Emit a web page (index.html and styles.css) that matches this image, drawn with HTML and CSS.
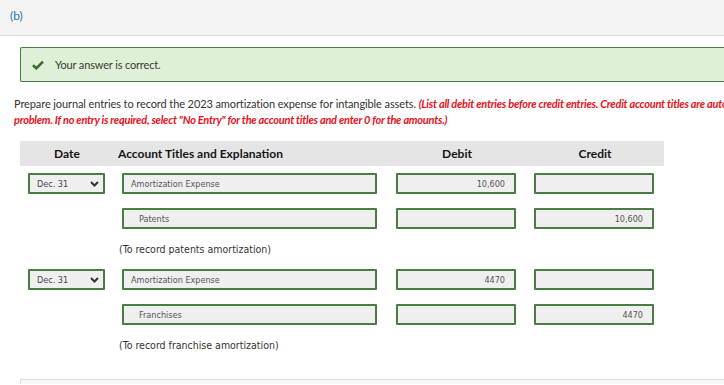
FILE: index.html
```html
<!DOCTYPE html>
<html>
<head>
<meta charset="utf-8">
<link rel="stylesheet" href="styles.css">
</head>
<body>
<div class="topbar"><span class="part">(b)</span></div>
<div class="content">
  <div class="notice">
    <svg class="check" width="12" height="10" viewBox="0 0 12 10"><path d="M1 5.2 L4.3 8.3 L11 1.6" fill="none" stroke="#3a6b2c" stroke-width="2.6"/></svg>
    <span class="notice-text">Your answer is correct.</span>
  </div>
  <div class="instr">
    <div class="line">Prepare journal entries to record the 2023 amortization expense for intangible assets. <em class="warn">(List all debit entries before credit entries. Credit account titles are automatically indented when amount is entered.</em></div>
    <div class="line"><em class="warn">problem. If no entry is required, select "No Entry" for the account titles and enter 0 for the amounts.)</em></div>
  </div>
  <div class="journal">
    <div class="jhead">
      <div class="h-date">Date</div>
      <div class="h-acct">Account Titles and Explanation</div>
      <div class="h-num">Debit</div>
      <div class="h-num">Credit</div>
    </div>
    <div class="jrow">
      <div class="cell"><div class="field sel"><span>Dec. 31</span><svg class="chev" width="9" height="6" viewBox="0 0 9 6"><path d="M1 1 L4.5 4.5 L8 1" fill="none" stroke="#333" stroke-width="2"/></svg></div></div>
      <div class="cell"><div class="field acct">Amortization Expense</div></div>
      <div class="cell"><div class="field num">10,600</div></div>
      <div class="cell"><div class="field num"></div></div>
    </div>
    <div class="jrow">
      <div class="cell"></div>
      <div class="cell"><div class="field acct indent">Patents</div></div>
      <div class="cell"><div class="field num"></div></div>
      <div class="cell"><div class="field num">10,600</div></div>
    </div>
    <div class="expl">(To record patents amortization)</div>
    <div class="jrow first">
      <div class="cell"><div class="field sel"><span>Dec. 31</span><svg class="chev" width="9" height="6" viewBox="0 0 9 6"><path d="M1 1 L4.5 4.5 L8 1" fill="none" stroke="#333" stroke-width="2"/></svg></div></div>
      <div class="cell"><div class="field acct">Amortization Expense</div></div>
      <div class="cell"><div class="field num">4470</div></div>
      <div class="cell"><div class="field num"></div></div>
    </div>
    <div class="jrow">
      <div class="cell"></div>
      <div class="cell"><div class="field acct indent">Franchises</div></div>
      <div class="cell"><div class="field num"></div></div>
      <div class="cell"><div class="field num">4470</div></div>
    </div>
    <div class="expl">(To record franchise amortization)</div>
  </div>
  <div class="nextbox"></div>
</div>
</body>
</html>
```
FILE: styles.css
```css
html, body {
  margin: 0;
  padding: 0;
  background: #fff;
  overflow: hidden;
  width: 724px;
  height: 385px;
}
body {
  font-family: Lato, "Liberation Sans", sans-serif;
  color: #333;
}
.topbar {
  height: 36px;
  background: #f4f4f4;
  border-bottom: 1px solid #dcdcdc;
  box-sizing: border-box;
  display: flex;
  align-items: center;
  padding-left: 10px;
}
.part {
  color: #2b74b4;
  font-size: 12px;
  padding-bottom: 5px;
}
.content {
  padding-left: 20px;
}
.notice {
  margin-top: 11px;
  width: 704px;
  height: 35px;
  box-sizing: border-box;
  background: #dff0d8;
  border: 1px solid #4b7f41;
  border-right: none;
  border-radius: 2px 0 0 2px;
  display: flex;
  align-items: center;
  padding-left: 11px;
}
.check {
  display: block;
}
.notice-text {
  margin-left: 11px;
  font-size: 11px;
  color: #3b3b2f;
  letter-spacing: -0.15px;
}
.instr {
  margin: 14px 0 0 -6px;
  font-size: 11px;
  line-height: 16px;
  width: 710px;
  overflow: hidden;
  letter-spacing: -0.1px;
}
.line {
  white-space: nowrap;
}
.warn {
  color: #e5121b;
  font-weight: bold;
  font-style: italic;
  letter-spacing: -0.25px;
}
.journal {
  margin-top: 13px;
  width: 644px;
}
.jhead, .jrow {
  display: grid;
  grid-template-columns: 94px 274px 138px 138px;
}
.jhead {
  height: 25px;
  background: #e5e5e5;
  align-items: center;
  font-weight: bold;
  font-size: 12px;
  color: #151515;
}
.h-date, .h-num {
  text-align: center;
}
.h-acct {
  padding-left: 4px;
}
.jrow {
  margin-top: 14px;
}
.jhead + .jrow {
  margin-top: 7px;
}
.jrow.first {
  margin-top: 10px;
}
.cell {
  padding-left: 8px;
}
.field {
  height: 21px;
  box-sizing: border-box;
  border: 2px solid #4a7d43;
  border-radius: 1px;
  background: #efefef;
  font-family: "DejaVu Sans Condensed", "DejaVu Sans", sans-serif;
  font-size: 9px;
  color: #555;
  display: flex;
  align-items: center;
}
.sel {
  width: 77px;
  padding: 0 4px 0 7px;
  justify-content: space-between;
  color: #444;
}
.acct {
  width: 255px;
  padding-left: 7px;
}
.acct.indent {
  padding-left: 15px;
}
.num {
  width: 120px;
  justify-content: flex-end;
  padding-right: 9px;
}
.chev {
  display: block;
}
.expl {
  margin-top: 10px;
  height: 20px;
  line-height: 20px;
  padding-left: 99px;
  font-family: "DejaVu Sans Condensed", "DejaVu Sans", sans-serif;
  font-size: 10.5px;
  color: #333;
}
.nextbox {
  margin-top: 24px;
  width: 704px;
  height: 4px;
  border: 1px solid #ddd;
  border-right: none;
  border-bottom: none;
  background: #f7f7f7;
}
```
